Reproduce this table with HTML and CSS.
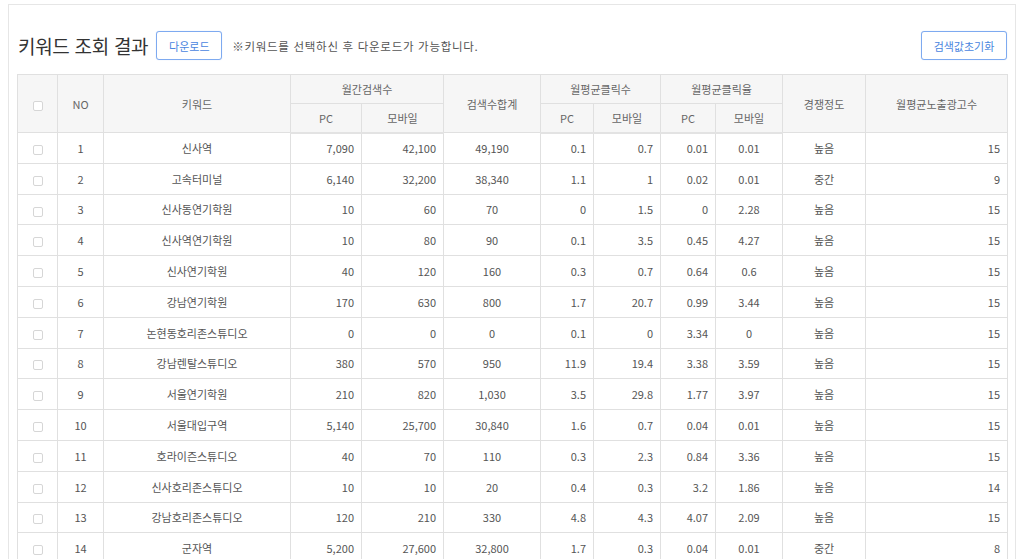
FILE: index.html
```html
<!DOCTYPE html>
<html lang="ko">
<head>
<meta charset="utf-8">
<link rel="stylesheet" href="styles.css">
</head>
<body>
<div class="panel">
  <div class="toolbar">
    <div class="left">
      <h2 class="title">키워드 조회 결과</h2>
      <button class="btn">다운로드</button>
      <span class="note">※키워드를 선택하신 후 다운로드가 가능합니다.</span>
    </div>
    <button class="btn btn-reset">검색값초기화</button>
  </div>
  <table class="grid">
    <colgroup>
      <col style="width:40px"><col style="width:46px"><col style="width:187px"><col style="width:71px"><col style="width:82px"><col style="width:97px"><col style="width:53px"><col style="width:67px"><col style="width:55px"><col style="width:67px"><col style="width:83px"><col style="width:142px">
    </colgroup>
    <thead>
      <tr class="h1">
        <th rowspan="2"><span class="cb"></span></th>
        <th rowspan="2">NO</th>
        <th rowspan="2">키워드</th>
        <th colspan="2">월간검색수</th>
        <th rowspan="2">검색수합계</th>
        <th colspan="2">월평균클릭수</th>
        <th colspan="2">월평균클릭율</th>
        <th rowspan="2">경쟁정도</th>
        <th rowspan="2">월평균노출광고수</th>
      </tr>
      <tr class="h2">
        <th>PC</th><th>모바일</th><th>PC</th><th>모바일</th><th>PC</th><th>모바일</th>
      </tr>
    </thead>
    <tbody>
      <tr><td><span class="cb"></span></td><td class="c">1</td><td class="c">신사역</td><td class="r">7,090</td><td class="r">42,100</td><td class="c">49,190</td><td class="r">0.1</td><td class="r">0.7</td><td class="r">0.01</td><td class="c">0.01</td><td class="c">높음</td><td class="r">15</td></tr>
      <tr><td><span class="cb"></span></td><td class="c">2</td><td class="c">고속터미널</td><td class="r">6,140</td><td class="r">32,200</td><td class="c">38,340</td><td class="r">1.1</td><td class="r">1</td><td class="r">0.02</td><td class="c">0.01</td><td class="c">중간</td><td class="r">9</td></tr>
      <tr><td><span class="cb"></span></td><td class="c">3</td><td class="c">신사동연기학원</td><td class="r">10</td><td class="r">60</td><td class="c">70</td><td class="r">0</td><td class="r">1.5</td><td class="r">0</td><td class="c">2.28</td><td class="c">높음</td><td class="r">15</td></tr>
      <tr><td><span class="cb"></span></td><td class="c">4</td><td class="c">신사역연기학원</td><td class="r">10</td><td class="r">80</td><td class="c">90</td><td class="r">0.1</td><td class="r">3.5</td><td class="r">0.45</td><td class="c">4.27</td><td class="c">높음</td><td class="r">15</td></tr>
      <tr><td><span class="cb"></span></td><td class="c">5</td><td class="c">신사연기학원</td><td class="r">40</td><td class="r">120</td><td class="c">160</td><td class="r">0.3</td><td class="r">0.7</td><td class="r">0.64</td><td class="c">0.6</td><td class="c">높음</td><td class="r">15</td></tr>
      <tr><td><span class="cb"></span></td><td class="c">6</td><td class="c">강남연기학원</td><td class="r">170</td><td class="r">630</td><td class="c">800</td><td class="r">1.7</td><td class="r">20.7</td><td class="r">0.99</td><td class="c">3.44</td><td class="c">높음</td><td class="r">15</td></tr>
      <tr><td><span class="cb"></span></td><td class="c">7</td><td class="c">논현동호리존스튜디오</td><td class="r">0</td><td class="r">0</td><td class="c">0</td><td class="r">0.1</td><td class="r">0</td><td class="r">3.34</td><td class="c">0</td><td class="c">높음</td><td class="r">15</td></tr>
      <tr><td><span class="cb"></span></td><td class="c">8</td><td class="c">강남렌탈스튜디오</td><td class="r">380</td><td class="r">570</td><td class="c">950</td><td class="r">11.9</td><td class="r">19.4</td><td class="r">3.38</td><td class="c">3.59</td><td class="c">높음</td><td class="r">15</td></tr>
      <tr><td><span class="cb"></span></td><td class="c">9</td><td class="c">서울연기학원</td><td class="r">210</td><td class="r">820</td><td class="c">1,030</td><td class="r">3.5</td><td class="r">29.8</td><td class="r">1.77</td><td class="c">3.97</td><td class="c">높음</td><td class="r">15</td></tr>
      <tr><td><span class="cb"></span></td><td class="c">10</td><td class="c">서울대입구역</td><td class="r">5,140</td><td class="r">25,700</td><td class="c">30,840</td><td class="r">1.6</td><td class="r">0.7</td><td class="r">0.04</td><td class="c">0.01</td><td class="c">높음</td><td class="r">15</td></tr>
      <tr><td><span class="cb"></span></td><td class="c">11</td><td class="c">호라이즌스튜디오</td><td class="r">40</td><td class="r">70</td><td class="c">110</td><td class="r">0.3</td><td class="r">2.3</td><td class="r">0.84</td><td class="c">3.36</td><td class="c">높음</td><td class="r">15</td></tr>
      <tr><td><span class="cb"></span></td><td class="c">12</td><td class="c">신사호리존스튜디오</td><td class="r">10</td><td class="r">10</td><td class="c">20</td><td class="r">0.4</td><td class="r">0.3</td><td class="r">3.2</td><td class="c">1.86</td><td class="c">높음</td><td class="r">14</td></tr>
      <tr><td><span class="cb"></span></td><td class="c">13</td><td class="c">강남호리존스튜디오</td><td class="r">120</td><td class="r">210</td><td class="c">330</td><td class="r">4.8</td><td class="r">4.3</td><td class="r">4.07</td><td class="c">2.09</td><td class="c">높음</td><td class="r">15</td></tr>
      <tr><td><span class="cb"></span></td><td class="c">14</td><td class="c">군자역</td><td class="r">5,200</td><td class="r">27,600</td><td class="c">32,800</td><td class="r">1.7</td><td class="r">0.3</td><td class="r">0.04</td><td class="c">0.01</td><td class="c">중간</td><td class="r">8</td></tr>
    </tbody>
  </table>
</div>
</body>
</html>
```

FILE: styles.css
```css
* { box-sizing: border-box; }
html, body { margin: 0; background: #fff; }
body {
  padding: 4px 8px 0 8px;
  font-family: "Noto Sans CJK KR", "Noto Sans", sans-serif;
  color: #555;
  overflow: hidden;
}
.panel {
  border: 1px solid #e6e6e6;
  border-bottom: none;
  padding: 26px 8px 0 8px;
  min-height: 600px;
}
.toolbar {
  display: flex;
  justify-content: space-between;
  align-items: center;
  height: 29px;
  margin-bottom: 14px;
}
.left {
  display: flex;
  align-items: center;
}
.title {
  margin: 0 0 0 1px;
  font-size: 19px;
  font-weight: 400;
  color: #333;
  letter-spacing: -0.3px;
  line-height: 29px;
}
.btn {
  font-family: inherit;
  height: 29px;
  width: 66px;
  border: 1px solid #7eaaf0;
  border-radius: 3px;
  background: #fff;
  color: #4a86e0;
  font-size: 11px;
  padding: 0;
  margin-left: 8px;
  box-shadow: 0 0 1px rgba(60,120,220,0.3);
}
.btn-reset {
  width: 86px;
  margin-left: 0;
}
.note {
  margin-left: 10px;
  font-size: 11.5px;
  color: #555;
  letter-spacing: 0.7px;
}
.grid {
  width: 990px;
  border-collapse: collapse;
  table-layout: fixed;
  font-size: 11px;
}
.grid th, .grid td {
  border: 1px solid #e0e0e0;
  padding: 0 7px;
  white-space: nowrap;
  overflow: hidden;
}
.grid th {
  background: #f6f6f6;
  font-weight: 400;
  color: #666;
  text-align: center;
}
.grid tr.h1 th { height: 29px; }
.grid tr.h2 th { height: 29px; border-bottom: 2px solid #e3e3e3; }
.grid td {
  height: 30.8px;
  color: #555;
  text-align: center;
}
.grid td.r { text-align: right; }
.grid td.c { text-align: center; }
.cb {
  display: inline-block;
  width: 10px;
  height: 10px;
  border: 1px solid #d6d6d6;
  border-radius: 2px;
  background: #fff;
  vertical-align: middle;
}
```
